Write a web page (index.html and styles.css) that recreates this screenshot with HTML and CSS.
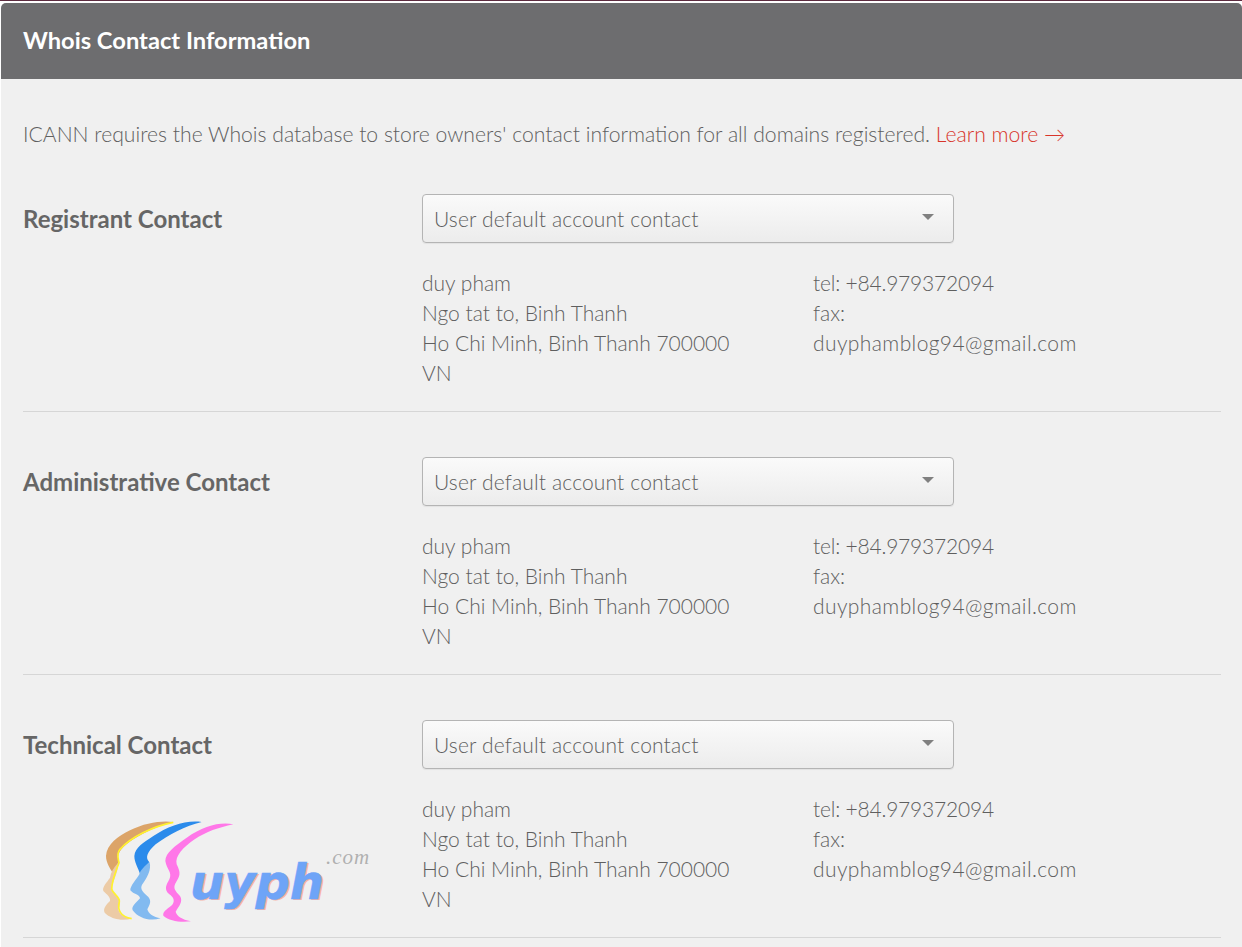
FILE: index.html
```html
<!DOCTYPE html>
<html lang="en">
<head>
<meta charset="utf-8">
<title>Whois Contact Information</title>
<link rel="stylesheet" href="styles.css">
</head>
<body>
<main class="panel">
  <header class="panel-head"><h1>Whois Contact Information</h1></header>
  <div class="panel-body">
    <p class="intro">ICANN requires the Whois database to store owners' contact information for all domains registered. <a href="#">Learn more →</a></p>

    <section class="contact">
      <h2>Registrant Contact</h2>
      <div class="contact-main">
        <div class="select"><span>User default account contact</span><i class="caret"></i></div>
        <div class="details">
          <div>duy pham<br>Ngo tat to, Binh Thanh<br>Ho Chi Minh, Binh Thanh 700000<br>VN</div>
          <div><span class="tel">tel: +84.979372094</span><br>fax:<br><span class="email">duyphamblog94@gmail.com</span></div>
        </div>
      </div>
    </section>

    <section class="contact">
      <h2>Administrative Contact</h2>
      <div class="contact-main">
        <div class="select"><span>User default account contact</span><i class="caret"></i></div>
        <div class="details">
          <div>duy pham<br>Ngo tat to, Binh Thanh<br>Ho Chi Minh, Binh Thanh 700000<br>VN</div>
          <div><span class="tel">tel: +84.979372094</span><br>fax:<br><span class="email">duyphamblog94@gmail.com</span></div>
        </div>
      </div>
    </section>

    <section class="contact">
      <h2>Technical Contact</h2>
      <div class="contact-main">
        <div class="select"><span>User default account contact</span><i class="caret"></i></div>
        <div class="details">
          <div>duy pham<br>Ngo tat to, Binh Thanh<br>Ho Chi Minh, Binh Thanh 700000<br>VN</div>
          <div><span class="tel">tel: +84.979372094</span><br>fax:<br><span class="email">duyphamblog94@gmail.com</span></div>
        </div>
      </div>
    </section>
  </div>
</main>

<div class="watermark">
  <svg class="faces" width="150" height="120" viewBox="0 0 450 360" aria-hidden="true">
    <path d="M250 33C215 28 165 35 120 58C85 75 50 100 48 135C48 155 60 172 68 185C78 170 86 160 85 145C80 125 100 105 130 85C165 62 205 45 250 33Z" fill="#dca468"/>
    <path d="M85 155C70 170 62 185 60 200C50 215 36 228 40 240C50 250 62 258 60 270C50 280 38 292 44 305C60 322 95 332 125 323C100 318 88 310 85 295C92 280 92 268 85 260C72 248 66 240 66 225C72 205 85 180 85 155Z" fill="#eccba6"/>
    <path d="M250 34C190 45 120 80 90 115C78 130 85 145 87 155C80 175 66 205 65 235C70 250 90 258 88 272C82 295 90 318 125 323" fill="none" stroke="#fff22e" stroke-width="5"/>
    <path d="M335 33C290 26 235 45 190 75C160 95 135 110 133 135C133 155 145 172 150 188C164 178 180 165 177 152C165 140 172 122 197 100C237 70 285 45 335 33Z" fill="#2b8beb"/>
    <path d="M178 152C165 165 150 178 148 190C140 205 120 225 121 238C130 250 150 250 150 262C140 275 123 285 128 298C145 322 180 332 212 322C190 318 175 308 172 295C180 280 185 270 175 258C160 245 148 235 157 220C168 205 187 175 178 152Z" fill="#82baf0"/>
    <path d="M430 40C390 32 340 45 290 80C255 105 226 125 226 150C230 175 248 185 238 205C230 220 220 235 238 250C250 258 255 268 248 280C238 292 216 300 220 314C238 330 270 335 303 331C275 325 260 315 257 302C267 285 280 272 270 255C257 240 246 232 259 212C274 190 269 180 260 160C254 135 279 110 314 85C349 62 385 50 430 40Z" fill="#ff77e8"/>
  </svg>
  <span class="wm-name">uyph</span>
  <span class="wm-com">.com</span>
</div>
</body>
</html>
```

FILE: styles.css
```css
* { box-sizing: border-box; }

html, body {
  margin: 0;
  height: 947px;
  overflow: hidden;
}

body {
  position: relative;
  background: #fff;
  border-top: 1px solid #5c2b3f;
  padding: 2px 0 0 1px;
  font-family: Lato, "Open Sans", sans-serif;
  font-size: 21px;
  font-weight: 300;
  color: #5f5f5f;
}

.panel {
  height: 944px;
  background: #f0f0f0;
  border-radius: 5px 5px 0 0;
  overflow: hidden;
}

.panel-head {
  height: 76px;
  background: #6d6d6f;
  display: flex;
  align-items: center;
  padding-left: 22px;
}

.panel-head h1 {
  margin: 0 0 3px;
  font-size: 23.7px;
  font-weight: 700;
  color: #fff;
}

.panel-body {
  padding: 0 21px 0 22px;
}

.intro {
  margin: 0;
  padding-top: 41px;
  height: 115px;
  font-size: 21.15px;
  line-height: 28px;
}

.intro a {
  color: #d8352a;
  text-decoration: none;
}

.contact {
  display: flex;
  padding-bottom: 23px;
  border-bottom: 1px solid #d6d6d6;
}

.contact + .contact {
  padding-top: 45px;
}

.contact h2 {
  flex: 0 0 399px;
  margin: 0;
  padding-top: 11px;
  font-size: 24px;
  line-height: 28px;
  font-weight: 700;
  color: #666;
}

.select {
  width: 532px;
  height: 49px;
  display: flex;
  align-items: center;
  justify-content: space-between;
  padding: 0 19px 0 11px;
  border: 1px solid #b4b4b4;
  border-radius: 4px;
  background: linear-gradient(#fafafa, #ececec);
  box-shadow: 0 1px 1px rgba(0, 0, 0, .06);
  letter-spacing: .15px;
}

.select span {
  margin-bottom: 1px;
}

.caret {
  width: 0;
  height: 0;
  margin-bottom: 3px;
  border-left: 6px solid transparent;
  border-right: 6px solid transparent;
  border-top: 6px solid #808080;
}

.details {
  display: grid;
  grid-template-columns: 391px 1fr;
  padding-top: 25px;
  line-height: 30px;
}

.tel {
  letter-spacing: -.2px;
}

.email {
  letter-spacing: .4px;
}

.watermark {
  position: absolute;
  left: 90px;
  top: 810px;
  width: 290px;
  height: 120px;
}

.faces {
  position: absolute;
  left: 0;
  top: 0;
}

.wm-name {
  position: absolute;
  left: 100px;
  top: 41px;
  font-family: "DejaVu Sans", sans-serif;
  font-size: 48px;
  line-height: 60px;
  font-weight: 700;
  font-style: italic;
  color: #6ea4f7;
  -webkit-text-stroke: .5px #6ea4f7;
  text-shadow: 2px 1px 0 #f6b3a6;
}

.wm-com {
  position: absolute;
  left: 236px;
  top: 35px;
  font-family: "Liberation Serif", serif;
  font-size: 21px;
  line-height: 22px;
  font-style: italic;
  letter-spacing: 1px;
  color: #b0b0b0;
}
```
